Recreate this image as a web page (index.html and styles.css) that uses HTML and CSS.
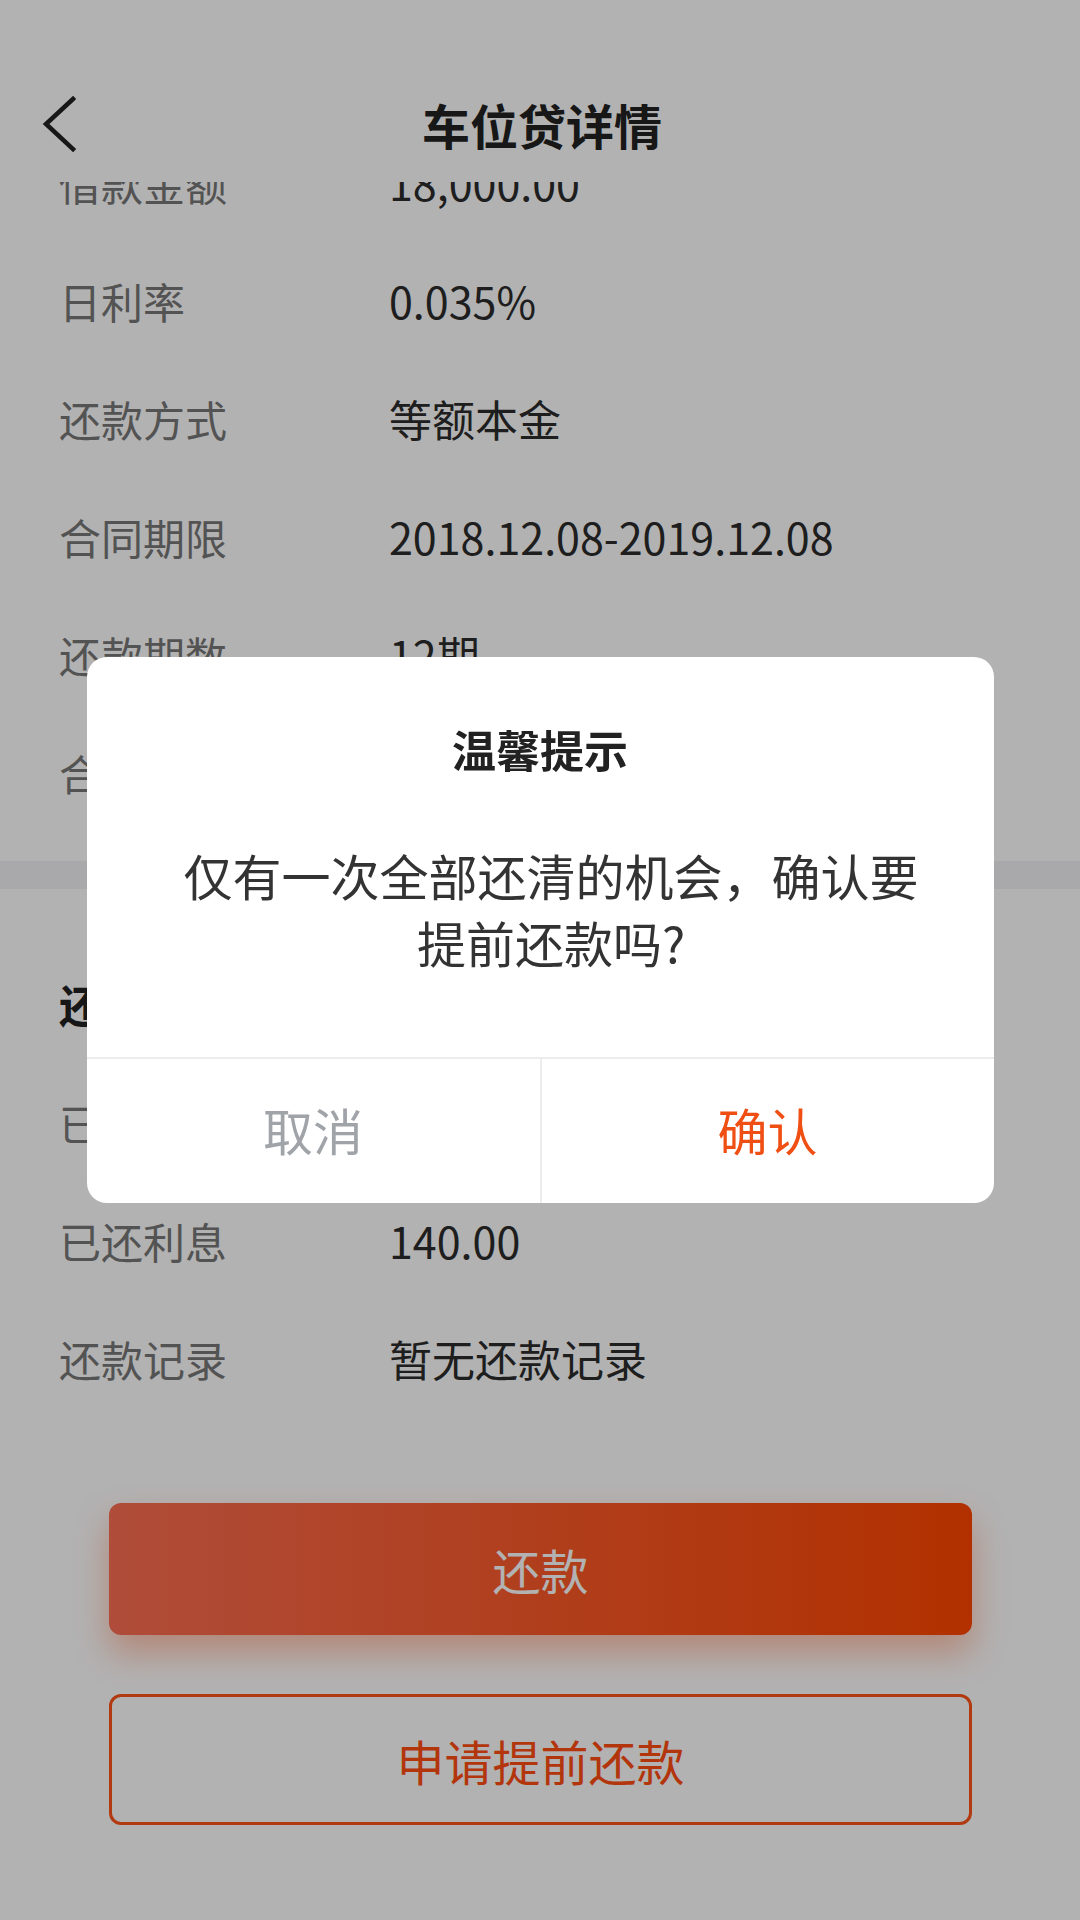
FILE: index.html
```html
<!DOCTYPE html>
<html lang="zh-CN">
<head>
<meta charset="utf-8">
<title>车位贷详情</title>
<link rel="stylesheet" href="styles.css">
</head>
<body>
<div class="page">
  <header class="nav">
    <button class="back" aria-label="返回">
      <svg width="40" height="60" viewBox="0 0 40 60"><polyline points="33,5 6,30 33,55" fill="none" stroke="#222" stroke-width="4.5" stroke-linecap="square" stroke-linejoin="miter"/></svg>
    </button>
    <h1 class="nav-title">车位贷详情</h1>
    <span></span>
  </header>

  <main class="scroll">
    <section class="section first">
      <div class="row"><span class="label">借款金额</span><span class="value">18,000.00</span></div>
      <div class="row"><span class="label">日利率</span><span class="value">0.035%</span></div>
      <div class="row"><span class="label">还款方式</span><span class="value">等额本金</span></div>
      <div class="row"><span class="label">合同期限</span><span class="value">2018.12.08-2019.12.08</span></div>
      <div class="row"><span class="label">还款期数</span><span class="value">12期</span></div>
      <div class="row"><span class="label">合同编号</span><span class="value">CW20181208001</span></div>
    </section>
    <div class="band"></div>
    <section class="section second">
      <h2 class="sec-title">还款信息</h2>
      <div class="row"><span class="label">已还本金</span><span class="value">1,500.00</span></div>
      <div class="row"><span class="label">已还利息</span><span class="value">140.00</span></div>
      <div class="row"><span class="label">还款记录</span><span class="value">暂无还款记录</span></div>
    </section>
    <div class="actions">
      <button class="btn primary">还款</button>
      <button class="btn outline">申请提前还款</button>
    </div>
  </main>
</div>

<div class="mask">
  <div class="dialog">
    <h3 class="dlg-title">温馨提示</h3>
    <p class="dlg-msg">仅有一次全部还清的机会，确认要提前还款吗?</p>
    <div class="dlg-btns">
      <button class="dlg-btn cancel">取消</button>
      <button class="dlg-btn ok">确认</button>
    </div>
  </div>
</div>
</body>
</html>
```
FILE: styles.css
```css
* { box-sizing: border-box; }
html, body { margin: 0; padding: 0; }
body {
  width: 1080px;
  height: 1920px;
  overflow: hidden;
  background: #fff;
  font-family: "Noto Sans CJK SC", "Noto Sans", sans-serif;
  color: #333;
}
button { font-family: inherit; border: none; background: none; padding: 0; margin: 0; }

.page { height: 1920px; display: flex; flex-direction: column; }

.nav {
  position: relative;
  z-index: 2;
  height: 182px;
  padding: 66px 0 0 40px;
  background: #fff;
  display: grid;
  grid-template-columns: 1fr auto 1fr;
  align-items: center;
}
.back { width: 40px; height: 60px; display: block; justify-self: start; }
.back svg { display: block; }
.nav-title {
  margin: 0 0 0 -36px;
  font-size: 48px;
  font-weight: 700;
  color: #222;
  line-height: 116px;
}

.scroll { flex: 1; overflow: hidden; }
.section { padding: 0 59px; }
.first { margin-top: -59px; padding-bottom: 30px; }
.row { height: 118px; display: flex; align-items: center; font-size: 42px; }
.label { width: 330px; color: #777; }
.value { color: #2b2b2b; font-size: 43px; }
.band { height: 28px; background: #f2f3f5; }
.sec-title {
  margin: 56px 0 0;
  height: 118px;
  line-height: 118px;
  font-size: 44px;
  font-weight: 700;
  color: #222;
}

.actions { padding: 86px 108px 0 109px; display: flex; flex-direction: column; gap: 59px; }
.btn { height: 132px; border-radius: 12px; font-size: 48px; width: 100%; }
.primary {
  background: linear-gradient(90deg, #fb6e53, #ff4600);
  color: #fff;
  box-shadow: 0 18px 34px rgba(255, 80, 20, 0.35);
}
.outline {
  height: 131px;
  border: 3px solid #ff5317;
  color: #ff4d12;
  background: transparent;
}

.mask {
  position: fixed;
  inset: 0;
  z-index: 10;
  background: rgba(0, 0, 0, 0.3);
  display: flex;
  flex-direction: column;
  align-items: center;
  padding-top: 657px;
}
.dialog {
  width: 907px;
  background: #fff;
  border-radius: 20px;
  overflow: hidden;
  text-align: center;
}
.dlg-title {
  margin: 62px 0 0;
  font-size: 44px;
  line-height: 60px;
  font-weight: 700;
  color: #222;
}
.dlg-msg {
  margin: 62px 0 0;
  padding: 0 66px 82px 88px;
  font-size: 49px;
  line-height: 67px;
  color: #333;
}
.dlg-btns {
  display: grid;
  grid-template-columns: 455px 1fr;
  border-top: 2px solid #ececec;
  height: 146px;
}
.dlg-btn { font-size: 50px; height: 144px; padding-bottom: 4px; }
.cancel { color: #a0a4a8; border-right: 2px solid #ececec; }
.ok { color: #f04f14; }
```
